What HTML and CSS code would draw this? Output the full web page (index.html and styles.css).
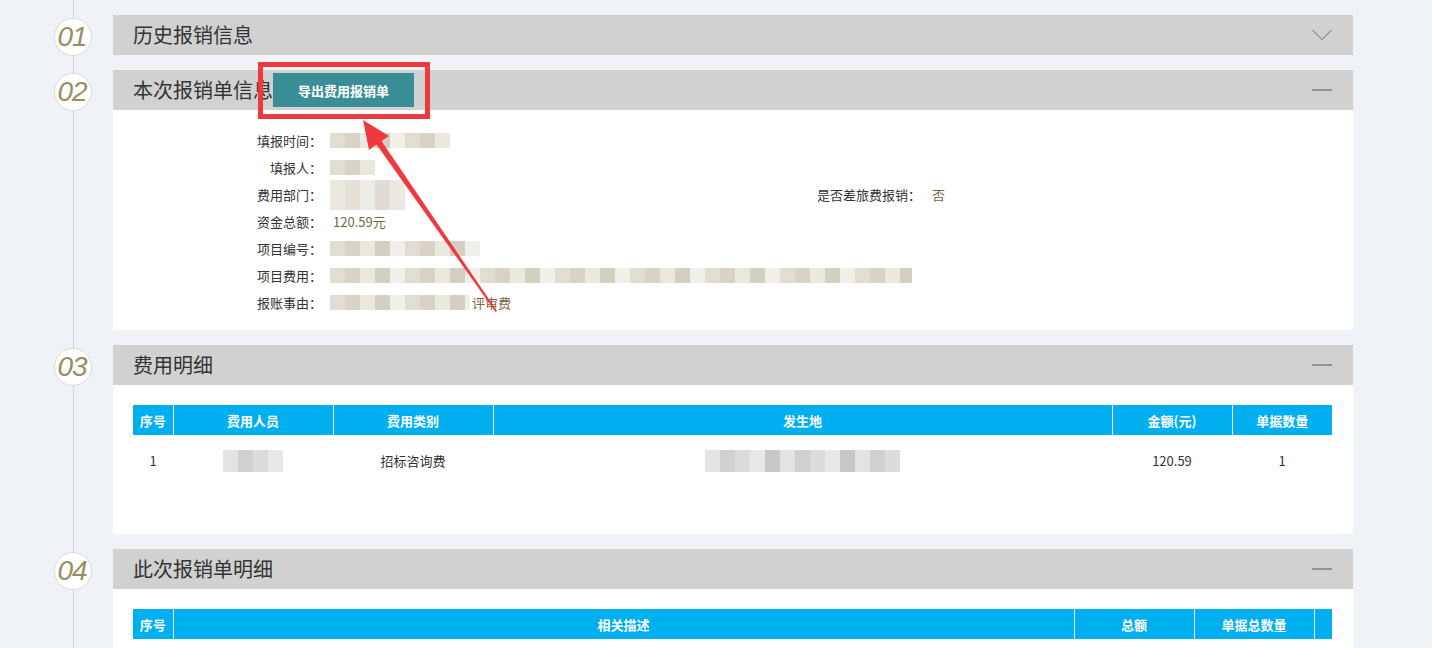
FILE: index.html
```html
<!DOCTYPE html>
<html lang="zh">
<head>
<meta charset="utf-8">
<title>报销单</title>
<link rel="stylesheet" href="styles.css">
</head>
<body>
<div class="page">
  <section class="sec">
    <div class="rail"><div class="num">01</div></div>
    <div class="panel">
      <div class="hd">
        <span class="ttl">历史报销信息</span>
        <svg class="ico" width="20" height="12" viewBox="0 0 20 12"><path d="M0.5 1 L10 10.5 L19.5 1" fill="none" stroke="#6a6a6a" stroke-width="1"/></svg>
      </div>
    </div>
  </section>

  <section class="sec">
    <div class="rail"><div class="num">02</div></div>
    <div class="panel">
      <div class="hd">
        <span class="ttl">本次报销单信息</span>
        <button class="export">导出费用报销单</button>
        <svg class="ico" width="20" height="2" viewBox="0 0 20 2"><path d="M0 1 H20" stroke="#555" stroke-width="1"/></svg>
      </div>
      <div class="info">
        <div class="row"><span class="lbl">填报时间：</span><span class="blur b120"></span></div>
        <div class="row"><span class="lbl">填报人：</span><span class="blur b45"></span></div>
        <div class="row">
          <div class="cell"><span class="lbl">费用部门：</span><span class="blur b75 tall"></span></div>
          <span class="lbl wide">是否差旅费报销：</span><span class="val">否</span>
        </div>
        <div class="row"><span class="lbl">资金总额：</span><span class="val">120.59元</span></div>
        <div class="row"><span class="lbl">项目编号：</span><span class="blur b150"></span></div>
        <div class="row"><span class="lbl">项目费用：</span><span class="blur b582"></span></div>
        <div class="row"><span class="lbl">报账事由：</span><span class="blur b140"></span><span class="val tight">评审费</span></div>
      </div>
    </div>
  </section>

  <section class="sec">
    <div class="rail"><div class="num">03</div></div>
    <div class="panel">
      <div class="hd">
        <span class="ttl">费用明细</span>
        <svg class="ico" width="20" height="2" viewBox="0 0 20 2"><path d="M0 1 H20" stroke="#555" stroke-width="1"/></svg>
      </div>
      <div class="tbody t3">
        <table class="grid">
          <colgroup><col class="c40"><col class="c160"><col class="c160"><col><col class="c120"><col class="c100"></colgroup>
          <thead><tr><th>序号</th><th>费用人员</th><th>费用类别</th><th>发生地</th><th>金额(元)</th><th>单据数量</th></tr></thead>
          <tbody><tr><td>1</td><td><span class="blur gray b60"></span></td><td>招标咨询费</td><td><span class="blur gray b195"></span></td><td>120.59</td><td>1</td></tr></tbody>
        </table>
      </div>
    </div>
  </section>

  <section class="sec">
    <div class="rail"><div class="num">04</div></div>
    <div class="panel">
      <div class="hd">
        <span class="ttl">此次报销单明细</span>
        <svg class="ico" width="20" height="2" viewBox="0 0 20 2"><path d="M0 1 H20" stroke="#555" stroke-width="1"/></svg>
      </div>
      <div class="tbody t4">
        <table class="grid">
          <colgroup><col class="c40"><col><col class="c120"><col class="c120"><col class="c18"></colgroup>
          <thead><tr><th>序号</th><th>相关描述</th><th>总额</th><th>单据总数量</th><th></th></tr></thead>
          <tbody><tr><td></td><td></td><td></td><td></td><td></td></tr></tbody>
        </table>
      </div>
    </div>
  </section>
</div>

<svg class="annot" width="1432" height="648" viewBox="0 0 1432 648">
  <rect x="260.5" y="64.5" width="167" height="52" fill="none" stroke="#ee3a3f" stroke-width="5"/>
  <polygon points="363,120 389,136 381.5,141 497,311 495.5,312 376.5,144.5 369,150" fill="#ee3a3f"/>
</svg>
</body>
</html>
```
FILE: styles.css
```css
html, body {
  margin: 0;
  padding: 0;
}
body {
  background: #eff2f6 linear-gradient(#d3d7dc, #d3d7dc) no-repeat 73px 0 / 1px 100%;
  font-family: "Noto Sans CJK SC", "Microsoft YaHei", sans-serif;
  color: #333;
  min-height: 900px;
  position: relative;
}
.page {
  padding-top: 15px;
}
.sec {
  display: flex;
  align-items: flex-start;
  margin-bottom: 15px;
}
.rail {
  width: 113px;
  height: 40px;
  flex: none;
}
.num {
  width: 38px;
  height: 38px;
  box-sizing: border-box;
  margin: 3px 0 0 54px;
  border: 1px solid #dedbd0;
  border-radius: 50%;
  background: #fff;
  display: flex;
  align-items: center;
  justify-content: center;
  font-family: "Liberation Sans", Arial, sans-serif;
  font-style: italic;
  font-size: 28px;
  color: #9a8d62;
  letter-spacing: -1px;
  padding-right: 2px;
}
.panel {
  width: 1240px;
  flex: none;
  background: #fff;
}
.hd {
  position: relative;
  height: 40px;
  background: #d1d1d1;
  display: flex;
  align-items: center;
  justify-content: space-between;
  padding: 0 21px 0 20px;
}
.ttl {
  font-size: 20px;
  color: #333;
  line-height: 40px;
}
.ico {
  display: block;
}
.export {
  position: absolute;
  left: 160px;
  top: 3px;
  width: 141px;
  height: 34px;
  border: 0;
  background: #3a8e96;
  color: #fff;
  font-family: "Noto Sans CJK SC", sans-serif;
  font-weight: bold;
  font-size: 13px;
  padding: 0;
}
.info {
  padding: 17px 0 14px 144px;
  font-size: 13px;
}
.row {
  display: flex;
  align-items: center;
  height: 27px;
}
.cell {
  width: 560px;
  display: flex;
  align-items: center;
}
.lbl {
  width: 65px;
  text-align: right;
  flex: none;
  color: #333;
  margin-right: 8px;
}
.lbl.wide {
  width: 104px;
}
.val {
  color: #7a6642;
  padding-left: 3px;
}
.val.tight {
  padding-left: 2px;
}
.blur {
  display: inline-block;
  height: 15px;
  background: repeating-linear-gradient(90deg, #e2ddd2 0 15px, #d9d3c6 15px 30px, #ebe8e0 30px 45px, #d5cfc1 45px 60px, #f1efea 60px 75px);
}
.blur.tall {
  height: 30px;
  background: repeating-linear-gradient(90deg, #ebe8e2 0 15px, #e4e0d8 15px 30px, #eeece7 30px 45px, #e0dcd3 45px 60px);
}
.blur.gray {
  height: 22px;
  background: repeating-linear-gradient(90deg, #e3e3e3 0 15px, #d0d0d0 15px 30px, #dcdcdc 30px 45px, #e8e8e8 45px 60px, #c8c8c8 60px 75px);
  vertical-align: middle;
}
.b45 { width: 45px; }
.b60 { width: 60px; }
.b75 { width: 75px; }
.b120 { width: 120px; }
.b140 { width: 140px; }
.b150 { width: 150px; }
.b195 { width: 195px; }
.b582 { width: 582px; }
.tbody {
  padding: 20px 21px 0 20px;
}
.t3 {
  padding-bottom: 48px;
}
.t4 {
  padding-bottom: 40px;
}
.grid {
  width: 1199px;
  border-collapse: collapse;
  table-layout: fixed;
  font-size: 13px;
}
.c18 { width: 18px; }
.c40 { width: 40px; }
.c100 { width: 100px; }
.c120 { width: 120px; }
.c160 { width: 160px; }
.grid th {
  height: 30px;
  background: #00aff0;
  color: #fff;
  font-weight: bold;
  border-left: 1px solid #fff;
  padding: 0;
}
.grid th:first-child {
  border-left: 0;
}
.grid td {
  height: 51px;
  text-align: center;
  color: #333;
  padding: 0;
}
.annot {
  position: absolute;
  left: 0;
  top: 0;
  pointer-events: none;
}
```
